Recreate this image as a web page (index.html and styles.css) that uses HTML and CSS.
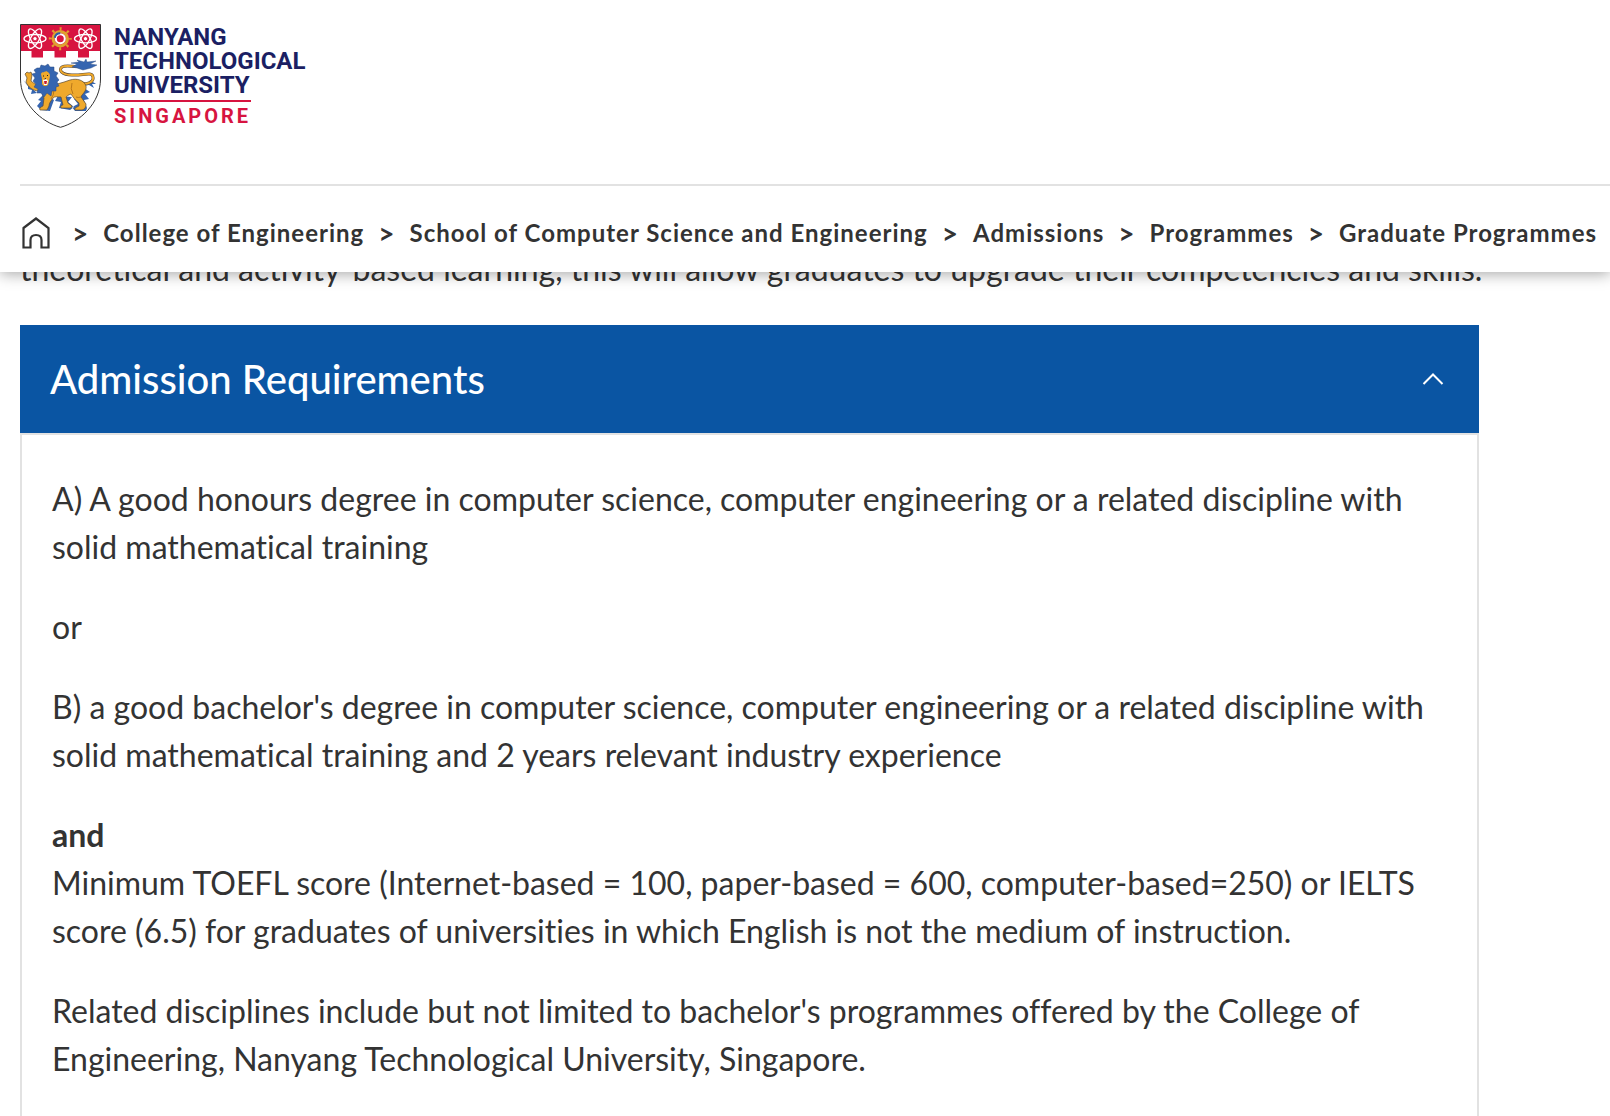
FILE: index.html
```html
<!DOCTYPE html>
<html lang="en">
<head>
    <meta charset="UTF-8">
    <meta name="viewport" content="width=device-width, initial-scale=1">
    <title>Admission Requirements</title>
    <link rel="stylesheet" href="styles.css">
</head>
<body>
    <header class="site-header">
        <a href="#" class="logo" aria-label="Nanyang Technological University Singapore">
            <svg class="logo-crest" viewBox="0 0 81 104" aria-hidden="true">
                <defs>
                    <g id="atom" fill="none" stroke="#fff" stroke-width="1.3">
                        <ellipse rx="11" ry="4.200"/>
                        <ellipse rx="11" ry="4.200" transform="rotate(60)"/>
                        <ellipse rx="11" ry="4.200" transform="rotate(120)"/>
                        <circle r="2.200" fill="#fff" stroke="#d71440" stroke-width="1"/>
                    </g>
                </defs>
                <path d="M.5 .5H80.5V55C80.5 79 60 98 40.500 103.300C21 98 .5 79 .5 55Z" fill="#fff"/>
                <path d="M.5 .5H80.5V27H69V33.500H58V27H46V33.500H34.500V27H23V33.500H11.500V27H.5Z" fill="#d71440"/>
                <use href="#atom" x="15" y="14.700"/>
                <use href="#atom" x="65.500" y="14.700"/>
                <g transform="translate(40.300 14.700)">
                    <circle r="10" fill="none" stroke="#e0a030" stroke-width="3" stroke-dasharray="2 5.854" stroke-dashoffset="1"/>
                    <circle r="7.200" fill="#d71440" stroke="#e0a030" stroke-width="3"/>
                    <circle r="4.500" fill="none" stroke="#fff" stroke-width="2"/>
                    <path d="M-5.500 -1A5.500 5.500 0 0 1 0 -5.500" fill="none" stroke="#2b5ca8" stroke-width="2"/>
                </g>
                <!-- tail -->
                <path d="M73 58L76 60L72 60L74 64L69 61L64 62Z" fill="#3565b0"/>
                <path d="M60 58C66 62 74 58 73 53C72 47 62 52 52 51C42 51 38 46 42 43C47 40 55 44 62 42" fill="none" stroke="#5a4a35" stroke-width="3"/>
                <path d="M60 58C66 62 74 58 73 53C72 47 62 52 52 51C42 51 38 46 42 43C47 40 55 44 62 42" fill="none" stroke="#efa92c" stroke-width="2"/>
                <path d="M52 43L57 40L51 39L59 38L57 36L64 38L66 35L67 38L76 37L70 40L77 41L71 44L63 46L57 44Z" fill="#3565b0" stroke="#26477f" stroke-width=".4"/>
                <!-- fur on the legs -->
                <path d="M24 70L18 76L21 77L17 82L21 86L30 87L34 76ZM38 72L35 77L41 78L39 84L50 86L54 83L48 78L52 73ZM64 64L70 68L65 70L69 75L64 76L67 84L66 87L55 87L52 83L58 80L54 75Z" fill="#3565b0"/>
                <!-- body -->
                <path d="M26 62C34 61 42 59 50 56C57 54 64 56 66 62C67 67 62 70 61 73L66 80C66 84 64 86 61 86H55C54 84 57 83 59 82L59 79C55 76 53 73 51 70C48 71 47 72 46 73L48 79L52 82C52 84 50 84 48 84H41C40 82 42 81 43 81L41 73C37 73 35 72 33 74C31 77 29 79 29 82L27 86H20C19 84 21 83 23 82L24 74C22 71 22 67 23 64Z" fill="#efa92c" stroke="#5a4a35" stroke-width=".7"/>
                <path d="M52 59Q50 65 53 70M61 73Q58 74 56 73M34 66Q34 71 31 75" fill="none" stroke="#b9781a"/>
                <!-- raised paw -->
                <path d="M6 59L3 56L8 62L8 65L12 66L11 70L17 69Z" fill="#3565b0"/>
                <path d="M5 50L7 48L9 49L11 48L12 51L11 57L15 60L19 61L19 67C13 67 8 63 6 58L7 54Z" fill="#efa92c" stroke="#5a4a35" stroke-width=".7"/>
                <!-- mane -->
                <path d="M17 44L20 44L21 41L25 42L28 40L30 43L34 43L34 47L38 49L36 52L39 56L37 58L39 62L36 63L36 67L32 67L31 72L27 69L24 73L21 69L17 69L18 65L14 63L16 60L13 57L15 54L12 50L16 49L14 46Z" fill="#3565b0" stroke="#26477f" stroke-width=".5"/>
                <path d="M21 50C22 47 25 49 26 47C28 48 30 49 30 52L29 57L28 61C26 63 23 62 22 60L22 55Z" fill="#efa92c"/>
                <path d="M23 56L26 55L28 57L27 61L24 61Z" fill="#fff"/>
                <path d="M24 57L27 57L26.500 60L24.500 60Z" fill="#c01830"/>
                <path d="M23 52H24M27 51.500H28M24.500 55L26 54.500" stroke="#222" stroke-width="1"/>
                <path d="M.5 .5H80.5V55C80.5 79 60 98 40.500 103.300C21 98 .5 79 .5 55Z" fill="none" stroke="#333"/>
            </svg>
            <span class="logo-text">
                <span class="logo-name">NANYANG<br>TECHNOLOGICAL<br>UNIVERSITY</span>
                <span class="logo-country">SINGAPORE</span>
            </span>
        </a>

        <nav class="breadcrumb" aria-label="Breadcrumb">
            <ol class="breadcrumb-list">
                <li>
                    <a href="#" class="home-link" aria-label="Home">
                        <svg class="home-icon" viewBox="0 0 28 32" aria-hidden="true">
                            <path d="M1.500 11L14 1.500L26.500 11V30.500H19.500V23Q19.500 18 14 18Q8.500 18 8.500 23V30.500H1.500Z" fill="none" stroke="#333" stroke-width="2.200"/>
                        </svg>
                    </a>
                </li>
                <li><a href="#">College of Engineering</a></li>
                <li><a href="#">School of Computer Science and Engineering</a></li>
                <li><a href="#">Admissions</a></li>
                <li><a href="#">Programmes</a></li>
                <li><a href="#">Graduate Programmes</a></li>
            </ol>
        </nav>
    </header>

    <main class="content">
        <p class="intro">theoretical and activity-based learning, this will allow graduates to upgrade their competencies and skills.</p>

        <section class="accordion">
            <h2 class="accordion-heading">
                <button type="button" class="accordion-toggle" aria-expanded="true" aria-controls="admission">
                    Admission Requirements
                    <svg class="chevron" viewBox="0 0 22 14" aria-hidden="true">
                        <path d="M1.500 12L11 2.500L20.500 12" fill="none" stroke="#fff" stroke-width="2"/>
                    </svg>
                </button>
            </h2>
            <div class="accordion-body" id="admission">
                <p>A) A good honours degree in computer science, computer engineering or a related discipline with solid mathematical training</p>
                <p>or</p>
                <p>B) a good bachelor's degree in computer science, computer engineering or a related discipline with solid mathematical training and 2 years relevant industry experience</p>
                <p><strong>and</strong><br>Minimum TOEFL score (Internet-based = 100, paper-based = 600, computer-based=250) or IELTS score (6.5) for graduates of universities in which English is not the medium of instruction.</p>
                <p>Related disciplines include but not limited to bachelor's programmes offered by the College of Engineering, Nanyang Technological University, Singapore.</p>
            </div>
        </section>
    </main>
</body>
</html>
```
FILE: styles.css
```css
* {
    box-sizing: border-box;
}

body {
    display: flex;
    flex-direction: column;
    min-height: 100vh;
    margin: 0;
    font-family: Lato, sans-serif;
    font-size: 32px;
    line-height: 48px;
    font-variant-ligatures: none;
    color: #333;
    background-color: #fff;
}

p {
    margin: 0;
}

a {
    color: inherit;
    text-decoration: none;
}

/* Header */
.site-header {
    position: sticky;
    top: 0;
    z-index: 10;
    padding: 24px 0 0 20px;
    background-color: #fff;
    box-shadow: 0 2px 14px rgba(0, 0, 0, 0.35);
}

.logo {
    display: flex;
    align-items: flex-start;
    gap: 13px;
    width: max-content;
    margin-bottom: 56px;
}

.logo-crest {
    width: 81px;
    height: 104px;
}

.logo-text {
    display: flex;
    flex-direction: column;
    align-items: flex-start;
    padding-top: 1px;
    font-family: Roboto, sans-serif;
    font-weight: bold;
}

.logo-name {
    font-size: 24px;
    line-height: 24px;
    color: #1b1f63;
}

.logo-country {
    padding-top: 2px;
    margin-top: 3px;
    border-top: 2px solid #d71440;
    font-size: 20px;
    line-height: 24px;
    letter-spacing: 3px;
    color: #d71440;
}

.breadcrumb {
    border-top: 2px solid #e2e2e2;
}

.breadcrumb-list {
    display: flex;
    align-items: center;
    height: 86px;
    margin: 0;
    padding: 8px 0 0 2px;
    list-style: none;
    font-size: 24px;
    line-height: 32px;
    font-weight: bold;
    letter-spacing: 1px;
    white-space: nowrap;
}

.breadcrumb-list li {
    display: flex;
    align-items: center;
}

.breadcrumb-list li + li::before {
    content: ">";
    padding: 0 14px;
    font-size: 28px;
}

.home-link {
    display: flex;
    margin-right: 8px;
}

.home-icon {
    width: 28px;
    height: 32px;
}

/* Content */
.content {
    display: flex;
    flex: 1;
    flex-direction: column;
    margin-top: -27px;
    padding: 0 131px 0 20px;
}

.intro {
    margin-bottom: 32px;
    white-space: nowrap;
}

.accordion {
    display: flex;
    flex: 1;
    flex-direction: column;
}

.accordion-heading {
    margin: 0;
}

.accordion-toggle {
    display: flex;
    justify-content: space-between;
    align-items: center;
    width: 100%;
    padding: 30px 35px 30px 30px;
    border: none;
    font-family: inherit;
    font-size: 40px;
    font-weight: 500;
    line-height: 48px;
    text-align: left;
    color: #fff;
    background-color: #0a55a3;
    cursor: pointer;
}

.chevron {
    width: 22px;
    height: 14px;
}

.accordion-body {
    flex: 1;
    padding: 40px 30px 0;
    border: 2px solid #e2e2e2;
    border-bottom: none;
}

.accordion-body p + p {
    margin-top: 32px;
}
```
